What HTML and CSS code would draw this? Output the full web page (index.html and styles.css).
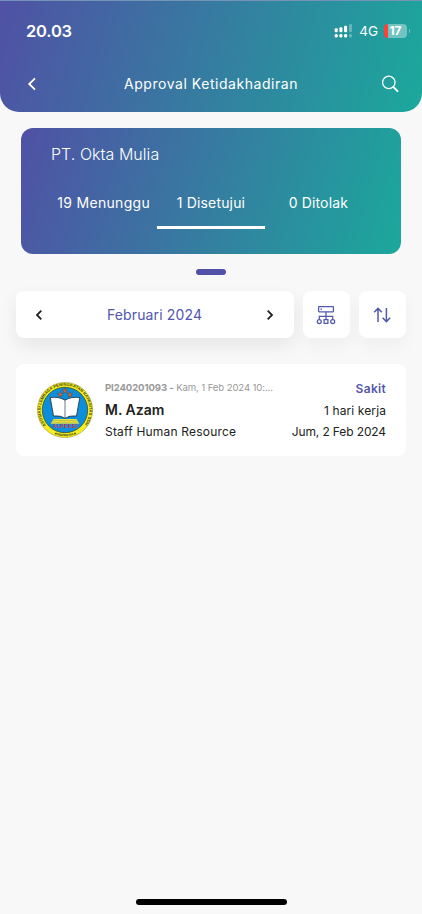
FILE: index.html
```html
<!DOCTYPE html>
<html lang="id">
<head>
<meta charset="utf-8">
<meta name="viewport" content="width=device-width, initial-scale=1">
<title>Approval Ketidakhadiran</title>
<link rel="stylesheet" href="styles.css">
</head>
<body>
<div class="screen">
  <header class="header">
    <div class="status">
      <span class="clock">20.03</span>
      <svg class="signal" width="19" height="14" viewBox="0 0 19 14" fill="#fff">
        <rect x="0.7" y="4.3" width="3" height="4" rx="1"/><rect x="5.4" y="3.3" width="3" height="5" rx="1"/><rect x="10.1" y="1.8" width="3" height="6.5" rx="1"/><rect x="15" y="0" width="3" height="8.3" rx="1" opacity=".3"/>
        <rect x="0.7" y="10" width="3" height="3.4" rx="1.2"/><rect x="5.4" y="10" width="3" height="3.4" rx="1.2"/><rect x="10.1" y="10" width="3" height="3.4" rx="1.2"/><rect x="15" y="10" width="3" height="3.4" rx="1.2" opacity=".3"/>
      </svg>
      <span class="network">4G</span>
      <span class="battery">17</span>
    </div>
    <nav class="navbar">
      <svg width="12" height="14" viewBox="0 0 12 14" fill="none" stroke="#fff" stroke-width="1.8"><path d="M9 1.3 3.2 7 9 12.7"/></svg>
      <h1 class="title">Approval Ketidakhadiran</h1>
      <svg width="18" height="18" viewBox="0 0 18 18" fill="none" stroke="#fff" stroke-width="1.3" stroke-linecap="round"><circle cx="7.8" cy="7.4" r="6.2"/><path d="m12.5 12.2 4 4" stroke-width="1.9"/></svg>
    </nav>
  </header>

  <section class="summary">
    <h2 class="company">PT. Okta Mulia</h2>
    <div class="tabs">
      <div class="tab wait"><span>19 Menunggu</span></div>
      <div class="tab active"><span>1 Disetujui</span></div>
      <div class="tab"><span>0 Ditolak</span></div>
    </div>
  </section>
  <div class="pager"></div>

  <div class="filters">
    <div class="month">
      <svg width="8" height="12" viewBox="0 0 8 12" fill="none" stroke="#222" stroke-width="1.8"><path d="M6.3 1.7 2 6l4.3 4.3"/></svg>
      <span class="month-name">Februari 2024</span>
      <svg width="8" height="12" viewBox="0 0 8 12" fill="none" stroke="#222" stroke-width="1.8"><path d="M1.7 1.7 6 6l-4.3 4.3"/></svg>
    </div>
    <div class="tool">
      <svg width="20" height="20" viewBox="0 0 20 20" fill="none" stroke="#5357ad" stroke-width="1.25"><rect x="2.6" y="1.6" width="14.8" height="5.2" rx=".5"/><path d="M5.2 3.4v1.6M10 6.8v7.6M3.3 14.4v-3.1h13.4v3.1"/><circle cx="3.3" cy="16.5" r="2"/><rect x="8.1" y="14.6" width="3.8" height="3.8"/><circle cx="16.7" cy="16.5" r="2"/></svg>
    </div>
    <div class="tool">
      <svg width="18" height="18" viewBox="0 0 18 18" fill="none" stroke="#5357ad" stroke-width="1.5"><path d="M5 16V2.4M1.2 6.2 5 2.4l3.8 3.8M13.4 2v13.6M9.6 11.8l3.8 3.8 3.8-3.8"/></svg>
    </div>
  </div>

  <article class="request">
    <svg class="avatar" width="56" height="56" viewBox="0 0 56 56">
      <defs><path id="ring-top" d="M8.9 43.2A24.4 24.4 0 1 1 47.1 43.2"/><path id="ring-bottom" d="M13.5 49.9A26.6 26.6 0 0 0 42.5 49.9"/></defs>
      <circle cx="28" cy="28" r="27.6" fill="#f4ed20" stroke="#8a8524" stroke-width=".5"/>
      <circle cx="28" cy="28" r="22.7" fill="#0c8edc" stroke="#35542f" stroke-width=".8"/>
      <text class="seal-text"><textPath href="#ring-top" textLength="108">ASOSIASI LEMBAGA PENINGKATAN KAPASITAS SDM</textPath></text>
      <text class="seal-text seal-base"><textPath href="#ring-bottom" startOffset="4" textLength="23">★INDONESIA★</textPath></text>
      <g fill="#b8683c" stroke="#54463e" stroke-width=".4"><path id="star" d="m28 5.8.9 1.9 2 .2-1.5 1.4.4 2-1.8-1-1.8 1 .4-2-1.5-1.4 2-.2z"/><use href="#star" x="-4.8" y="3.7"/><use href="#star" x="5" y="3.7"/></g>
      <path d="M13.2 15.5q9-1 14.8 2.7 5.8-3.7 14.8-2.7L39.5 34Q32 33.3 28 36.3 24 33.3 16.5 34z" fill="#fff" stroke="#263b49" stroke-width=".9"/>
      <path d="M28 18.2v18" stroke="#465966" stroke-width=".8"/>
      <path d="M16.5 37h23l2.8 4.8H13.7z" fill="#e6df3c"/>
      <path d="M15.8 38.5h24.4M14.9 40.2h26.2" stroke="#8aa552" stroke-width=".35"/>
      <text class="seal-name" x="16" y="46.4" textLength="24">ALPEKSI</text>
    </svg>
    <div class="person">
      <div class="meta"><b>PI240201093 -</b> <span>Kam, 1 Feb 2024 10:...</span></div>
      <div class="name">M. Azam</div>
      <div class="role">Staff Human Resource</div>
    </div>
    <div class="leave">
      <div class="kind">Sakit</div>
      <div class="days">1 hari kerja</div>
      <div class="date">Jum, 2 Feb 2024</div>
    </div>
  </article>
  <div class="home-bar"></div>
</div>
</body>
</html>
```
FILE: styles.css
```css
* { box-sizing: border-box; }
body { margin: 0; background: #f8f8f8; font-family: Inter, "Liberation Sans", sans-serif; color: #222; }
h1, h2 { margin: 0; font-weight: 400; }
svg { display: block; flex: none; }
.screen { width: 422px; height: 914px; display: flex; flex-direction: column; overflow: hidden; white-space: nowrap; }
.header { height: 111.5px; flex: none; border-radius: 0 0 19px 19px; border-top: 1px solid #7493b5; background: linear-gradient(105deg, #5051a5, #1ba89c); color: #fff; }
.status { height: 60px; padding: 0 13px 0 26px; display: flex; align-items: center; }
.clock { font-size: 16.5px; font-weight: 600; letter-spacing: -.2px; margin-right: auto; }
.network { font-size: 13.5px; margin: 0 6px 0 6px; }
.battery { width: 23px; height: 14px; margin-right: 2px; border-radius: 4px; background: linear-gradient(90deg, #ff4036 4px, #72c4c1 4px); font-size: 12px; line-height: 14px; font-weight: 700; text-align: center; position: relative; }
.battery::after { content: ""; position: absolute; right: -3px; top: 5px; width: 1.5px; height: 4px; border-radius: 0 2px 2px 0; background: #72c4c1; }
.navbar { height: 45px; padding: 0 23px 0 26px; display: flex; align-items: center; justify-content: space-between; }
.title { font-size: 14px; letter-spacing: .54px; margin-left: 3px; }
.summary { width: 380px; height: 126px; flex: none; margin: 16px 0 0 21px; padding: 15px 29px; border-radius: 12px; background: linear-gradient(107deg, #5051a5, #1ba89c); color: #fff; }
.company { font-size: 16px; line-height: 22px; font-weight: 300; letter-spacing: .05px; margin-left: 1px; }
.tabs { width: 322px; margin-top: 18px; display: grid; grid-template-columns: repeat(3, 1fr); }
.tab { height: 46px; padding-top: 9px; font-size: 14px; line-height: 22px; letter-spacing: .15px; text-align: center; border-bottom: 3px solid transparent; }
.tab.wait { letter-spacing: .3px; }
.tab.active { border-color: #fff; }
.pager { width: 30px; height: 6px; flex: none; margin: 15.5px 0 0 196px; border-radius: 3px; background: #5053a5; }
.filters { height: 47px; flex: none; margin: 16px 16px 0; display: grid; grid-template-columns: 278px 47px 47px; column-gap: 9px; }
.month, .tool { background: #fff; border-radius: 8px; display: flex; align-items: center; justify-content: center; box-shadow: 0 8px 18px rgba(0,0,0,.07); }
.tool { padding-right: 1px; box-shadow: 0 8px 18px rgba(0,0,0,.04); }
.month { justify-content: space-between; padding: 0 20px 0 19px; }
.month-name { font-size: 14px; letter-spacing: .14px; color: #5357ad; }
.request { height: 92px; flex: none; margin: 26px 16px 0; padding: 13px 20px 0 21px; display: flex; background: #fff; border-radius: 8px; }
.avatar { margin-top: 5px; }
.seal-text { font: 700 4px "Liberation Sans", sans-serif; fill: #484412; }
.seal-base { font-size: 3.2px; }
.seal-name { font: 700 4.6px "Liberation Sans", sans-serif; fill: #e0303c; }
.person { margin-left: 12px; line-height: 22px; }
.leave { margin-left: auto; text-align: right; line-height: 22px; }
.meta { font-size: 9.6px; height: 22px; color: #999; }
.meta b { letter-spacing: -.12px; }
.meta span { letter-spacing: -.12px; }
.name { font-size: 14px; font-weight: 600; }
.role, .days, .date { font-size: 12px; }
.role { letter-spacing: .2px; }
.days { letter-spacing: .1px; }
.date { letter-spacing: -.12px; }
.kind { font-size: 12px; font-weight: 600; letter-spacing: .3px; color: #5357ad; }
.kind, .days { position: relative; top: .5px; }
.home-bar { width: 151px; height: 6px; margin: auto auto 9px; border-radius: 3px; background: #000; }
```
